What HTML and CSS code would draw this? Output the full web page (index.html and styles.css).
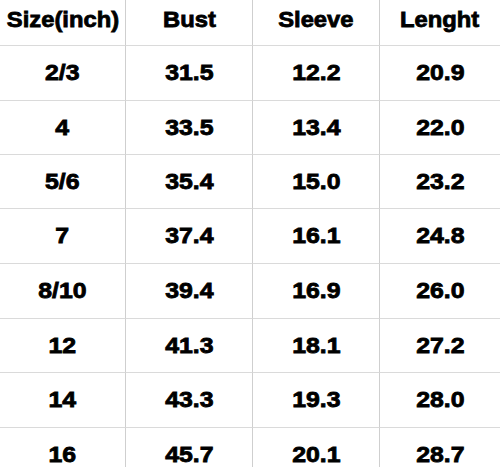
FILE: index.html
```html
<!DOCTYPE html>
<html>
<head>
<meta charset="utf-8">
<link rel="stylesheet" href="styles.css">
</head>
<body>
<div class="chart">
  <div class="cell head"><span>Size(inch)</span></div>
  <div class="cell head"><span>Bust</span></div>
  <div class="cell head"><span>Sleeve</span></div>
  <div class="cell head last"><span>Lenght</span></div>

  <div class="cell"><span>2/3</span></div>
  <div class="cell"><span>31.5</span></div>
  <div class="cell"><span>12.2</span></div>
  <div class="cell last"><span>20.9</span></div>

  <div class="cell"><span>4</span></div>
  <div class="cell"><span>33.5</span></div>
  <div class="cell"><span>13.4</span></div>
  <div class="cell last"><span>22.0</span></div>

  <div class="cell"><span>5/6</span></div>
  <div class="cell"><span>35.4</span></div>
  <div class="cell"><span>15.0</span></div>
  <div class="cell last"><span>23.2</span></div>

  <div class="cell"><span>7</span></div>
  <div class="cell"><span>37.4</span></div>
  <div class="cell"><span>16.1</span></div>
  <div class="cell last"><span>24.8</span></div>

  <div class="cell"><span>8/10</span></div>
  <div class="cell"><span>39.4</span></div>
  <div class="cell"><span>16.9</span></div>
  <div class="cell last"><span>26.0</span></div>

  <div class="cell"><span>12</span></div>
  <div class="cell"><span>41.3</span></div>
  <div class="cell"><span>18.1</span></div>
  <div class="cell last"><span>27.2</span></div>

  <div class="cell"><span>14</span></div>
  <div class="cell"><span>43.3</span></div>
  <div class="cell"><span>19.3</span></div>
  <div class="cell last"><span>28.0</span></div>

  <div class="cell"><span>16</span></div>
  <div class="cell"><span>45.7</span></div>
  <div class="cell"><span>20.1</span></div>
  <div class="cell last"><span>28.7</span></div>
</div>
</body>
</html>
```
FILE: styles.css
```css
html, body {
  margin: 0;
  padding: 0;
  background: #fff;
}
body {
  width: 500px;
  height: 467px;
  overflow: hidden;
}
.chart {
  display: grid;
  grid-template-columns: 126px 127px 127px 120px;
  grid-template-rows: 46px 55px 54px 54px 55px 55px 54px 55px 55px;
  font-family: "Liberation Sans", Arial, sans-serif;
  font-weight: bold;
  font-size: 22px;
  color: #000;
}
.cell {
  display: flex;
  align-items: center;
  justify-content: center;
  border-right: 1px solid #cfcfcf;
  border-bottom: 1px solid #dadada;
  box-sizing: border-box;
}
.cell.last {
  border-right: none;
}
.cell span {
  display: inline-block;
  transform: scaleX(1.13);
  -webkit-text-stroke: 0.8px #000;
  line-height: 1;
}
.head span {
  margin-top: -5px;
  transform: scaleX(1.08);
}
```
